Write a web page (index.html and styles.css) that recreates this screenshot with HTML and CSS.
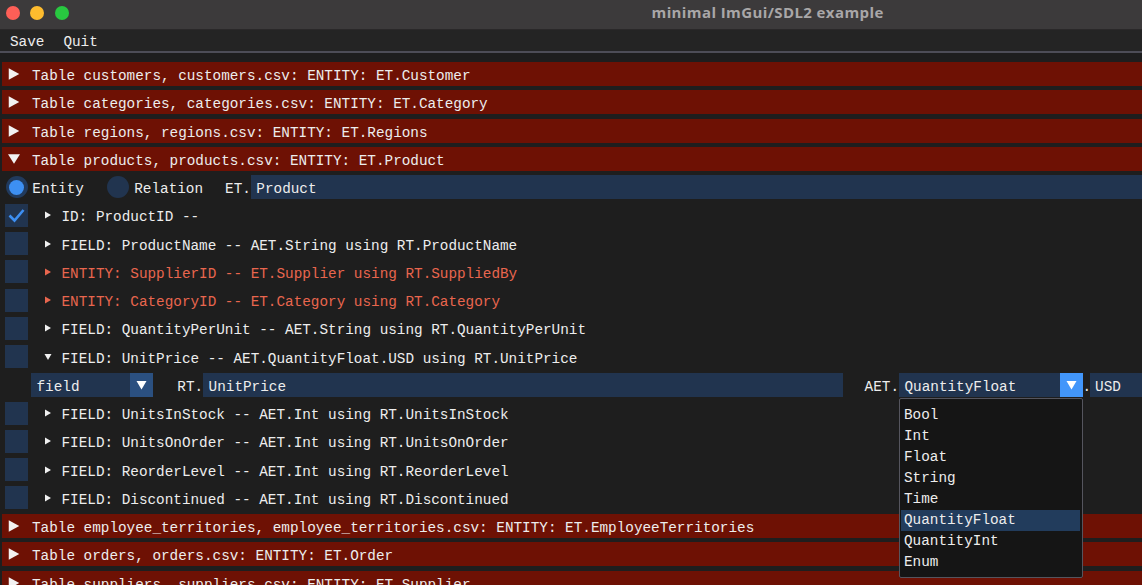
FILE: index.html
```html
<!DOCTYPE html>
<html>
<head>
<meta charset="utf-8">
<link rel="stylesheet" href="styles.css">
</head>
<body>
<div class="titlebar">
  <div class="lights"><span class="light red"></span><span class="light yellow"></span><span class="light green"></span></div>
  <div class="title">minimal ImGui/SDL2 example</div>
</div>
<div class="menubar"><span class="menu">Save</span><span class="menu">Quit</span></div>
<div class="sep"></div>
<div class="content">
  <div class="row header"><svg class="harrow" viewBox="0 0 16 16"><polygon points="2.75,2.2 13.25,8 2.75,13.8"/></svg><span class="t">Table customers, customers.csv: ENTITY: ET.Customer</span></div>
  <div class="row header"><svg class="harrow" viewBox="0 0 16 16"><polygon points="2.75,2.2 13.25,8 2.75,13.8"/></svg><span class="t">Table categories, categories.csv: ENTITY: ET.Category</span></div>
  <div class="row header"><svg class="harrow" viewBox="0 0 16 16"><polygon points="2.75,2.2 13.25,8 2.75,13.8"/></svg><span class="t">Table regions, regions.csv: ENTITY: ET.Regions</span></div>
  <div class="row header"><svg class="harrow" viewBox="0 0 16 16"><polygon points="2,3.3 14,3.3 8,12.8"/></svg><span class="t">Table products, products.csv: ENTITY: ET.Product</span></div>

  <div class="row entity">
    <span class="radio on"><span class="dot"></span></span><span class="t lbl-entity">Entity</span>
    <span class="radio second"></span><span class="t lbl-relation">Relation</span>
    <span class="t lbl-et">ET.</span><div class="input grow"><span class="t">Product</span></div>
  </div>

  <div class="row item"><span class="check"><svg viewBox="0 0 23 23"><polyline points="4.5,11.5 9.5,16.5 18.5,6"/></svg></span><svg class="tarrow" viewBox="0 0 10 10"><polygon points="2,1.5 8,5 2,8.5"/></svg><span class="t">ID: ProductID --</span></div>
  <div class="row item"><span class="check"></span><svg class="tarrow" viewBox="0 0 10 10"><polygon points="2,1.5 8,5 2,8.5"/></svg><span class="t">FIELD: ProductName -- AET.String using RT.ProductName</span></div>
  <div class="row item warn"><span class="check"></span><svg class="tarrow" viewBox="0 0 10 10"><polygon points="2,1.5 8,5 2,8.5"/></svg><span class="t">ENTITY: SupplierID -- ET.Supplier using RT.SuppliedBy</span></div>
  <div class="row item warn"><span class="check"></span><svg class="tarrow" viewBox="0 0 10 10"><polygon points="2,1.5 8,5 2,8.5"/></svg><span class="t">ENTITY: CategoryID -- ET.Category using RT.Category</span></div>
  <div class="row item"><span class="check"></span><svg class="tarrow" viewBox="0 0 10 10"><polygon points="2,1.5 8,5 2,8.5"/></svg><span class="t">FIELD: QuantityPerUnit -- AET.String using RT.QuantityPerUnit</span></div>
  <div class="row item"><span class="check"></span><svg class="tarrow" viewBox="0 0 10 10"><polygon points="1.5,2 8.5,2 5,8"/></svg><span class="t">FIELD: UnitPrice -- AET.QuantityFloat.USD using RT.UnitPrice</span></div>

  <div class="row edit">
    <div class="combo kind"><span class="t">field</span><span class="cbtn"><svg viewBox="0 0 23 24"><polygon points="6.5,8 16.5,8 11.5,16.5"/></svg></span></div>
    <span class="t lbl-rt">RT.</span><div class="input rt"><span class="t">UnitPrice</span></div>
    <span class="t lbl-aet">AET.</span><div class="combo aet"><span class="t">QuantityFloat</span><span class="cbtn active"><svg viewBox="0 0 23 24"><polygon points="6.5,8 16.5,8 11.5,16.5"/></svg></span></div>
    <span class="t dot-sep">.</span><div class="input grow"><span class="t">USD</span></div>
  </div>

  <div class="row item"><span class="check"></span><svg class="tarrow" viewBox="0 0 10 10"><polygon points="2,1.5 8,5 2,8.5"/></svg><span class="t">FIELD: UnitsInStock -- AET.Int using RT.UnitsInStock</span></div>
  <div class="row item"><span class="check"></span><svg class="tarrow" viewBox="0 0 10 10"><polygon points="2,1.5 8,5 2,8.5"/></svg><span class="t">FIELD: UnitsOnOrder -- AET.Int using RT.UnitsOnOrder</span></div>
  <div class="row item"><span class="check"></span><svg class="tarrow" viewBox="0 0 10 10"><polygon points="2,1.5 8,5 2,8.5"/></svg><span class="t">FIELD: ReorderLevel -- AET.Int using RT.ReorderLevel</span></div>
  <div class="row item"><span class="check"></span><svg class="tarrow" viewBox="0 0 10 10"><polygon points="2,1.5 8,5 2,8.5"/></svg><span class="t">FIELD: Discontinued -- AET.Int using RT.Discontinued</span></div>

  <div class="row header"><svg class="harrow" viewBox="0 0 16 16"><polygon points="2.75,2.2 13.25,8 2.75,13.8"/></svg><span class="t">Table employee_territories, employee_territories.csv: ENTITY: ET.EmployeeTerritories</span></div>
  <div class="row header"><svg class="harrow" viewBox="0 0 16 16"><polygon points="2.75,2.2 13.25,8 2.75,13.8"/></svg><span class="t">Table orders, orders.csv: ENTITY: ET.Order</span></div>
  <div class="row header"><svg class="harrow" viewBox="0 0 16 16"><polygon points="2.75,2.2 13.25,8 2.75,13.8"/></svg><span class="t">Table suppliers, suppliers.csv: ENTITY: ET.Supplier</span></div>
</div>

<div class="popup">
  <div class="opt">Bool</div>
  <div class="opt">Int</div>
  <div class="opt">Float</div>
  <div class="opt">String</div>
  <div class="opt">Time</div>
  <div class="opt sel">QuantityFloat</div>
  <div class="opt">QuantityInt</div>
  <div class="opt">Enum</div>
</div>
</body>
</html>
```

FILE: styles.css
```css
* { box-sizing: border-box; margin: 0; padding: 0; }

html, body {
  width: 1142px;
  height: 585px;
  overflow: hidden;
  background: #1e1e1e;
}

body {
  font-family: "Liberation Mono", "DejaVu Sans Mono", monospace;
  font-size: 14.33px;
  color: #ededed;
  position: relative;
}

/* ---- macOS title bar ---- */
.titlebar {
  height: 30px;
  background: #3c3a3b;
  border-bottom: 1px solid #2a2829;
  display: flex;
  align-items: flex-start;
}
.lights {
  display: flex;
  gap: 10.5px;
  padding: 5.5px 0 0 5.5px;
}
.light {
  width: 14px;
  height: 14px;
  border-radius: 50%;
  display: block;
}
.light.red { background: #fe5f57; }
.light.yellow { background: #febc2e; }
.light.green { background: #28c840; }
.title {
  margin-left: 583px;
  font-family: "Open Sans", "Liberation Sans", sans-serif;
  font-weight: 700;
  font-size: 15px;
  letter-spacing: 0.4px;
  line-height: 24px;
  color: #a9a7a8;
}

/* ---- ImGui menu bar ---- */
.menubar {
  height: 21px;
  background: #242424;
  display: flex;
  padding: 3px 0 0 10px;
  line-height: 19px;
}
.menu { margin-right: 19px; }
.sep { height: 2px; background: #4d4d57; }

/* ---- content ---- */
.content {
  display: flex;
  flex-direction: column;
  gap: 4.25px;
  padding: 9px 0 0 2px;
}
.row {
  height: 24px;
  display: flex;
  align-items: center;
  flex-shrink: 0;
  white-space: nowrap;
}
.t {
  display: block;
  line-height: 20px;
  padding-top: 4px;
  height: 24px;
}

.header { background: #6e1104; }
.harrow {
  width: 16px;
  height: 16px;
  margin-left: 4px;
  margin-right: 10px;
  fill: #f2f2f2;
  flex-shrink: 0;
}

/* radio row */
.radio {
  width: 22px;
  height: 22px;
  border-radius: 50%;
  background: #21344f;
  display: flex;
  align-items: center;
  justify-content: center;
  flex-shrink: 0;
  margin-left: 3.7px;
}
.radio.on { background: #213a5d; }
.radio .dot {
  width: 15px;
  height: 15px;
  border-radius: 50%;
  background: #3d8ff2;
}
.radio.second { margin-left: 23.1px; }
.lbl-entity { margin-left: 4.6px; }
.lbl-relation { margin-left: 5.3px; }
.lbl-et { margin-left: 22px; }

.input {
  height: 24px;
  background: #21344f;
  padding-left: 5.5px;
  overflow: hidden;
}
.grow { flex: 1; }

/* tree items */
.check {
  width: 23px;
  height: 23px;
  background: #21344f;
  margin-left: 3px;
  flex-shrink: 0;
  display: block;
}
.check svg {
  width: 23px;
  height: 23px;
  fill: none;
  stroke: #3d8ff2;
  stroke-width: 2.6;
  display: block;
}
.tarrow {
  width: 10px;
  height: 10px;
  margin-left: 14.5px;
  margin-right: 9px;
  fill: #f0f0f0;
  flex-shrink: 0;
}
.warn { color: #e9664e; }
.warn .tarrow { fill: #e9664e; }

/* edit row */
.combo {
  height: 24px;
  background: #21344f;
  display: flex;
  justify-content: space-between;
  padding-left: 5.5px;
  flex-shrink: 0;
}
.combo.kind { width: 122.3px; margin-left: 29px; }
.combo.aet { width: 184px; }
.cbtn {
  width: 23px;
  height: 24px;
  background: #2b5080;
  display: block;
}
.cbtn.active { background: #4296fa; }
.cbtn svg { width: 23px; height: 24px; display: block; fill: #ffffff; }
.lbl-rt { margin-left: 24px; }
.input.rt { width: 640px; flex-shrink: 0; }
.lbl-aet { margin-left: 21.5px; }
.dot-sep { margin-left: -0.5px; margin-right: -1.5px; }

/* popup list */
.popup {
  position: absolute;
  left: 899px;
  top: 398px;
  width: 184px;
  height: 180px;
  background: #151515;
  border: 1px solid #55555e;
  border-radius: 2px;
  padding: 5.5px 2px 0 1px;
}
.opt {
  height: 21px;
  line-height: 21px;
  padding-left: 3px;
}
.opt.sel { background: #223c5c; }
```
